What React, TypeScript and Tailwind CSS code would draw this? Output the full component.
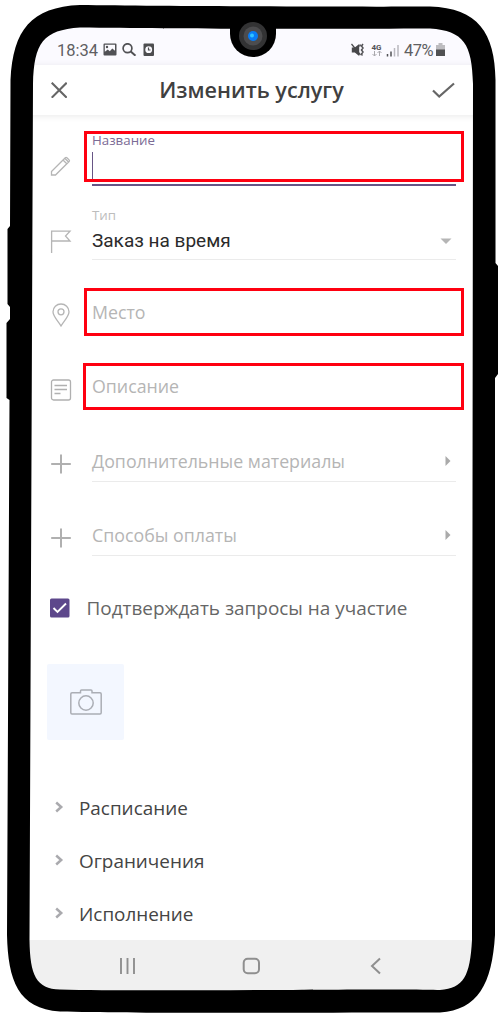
import type { ReactNode } from "react";

const sans = "font-['Open_Sans','Noto_Sans',sans-serif]";
const roboto = "font-['Roboto',sans-serif]";

function StatusBar() {
  return (
    <div className={`${roboto} flex h-[65px] items-end bg-[#fbfaff] pr-[54px] pb-[4px] pl-[57px] text-[16.5px] text-[#5f5f63]`}>
      <span className="w-[46px] leading-5 whitespace-nowrap">18:34</span>
      <svg className="mb-[5px] h-[13px] w-[52px]" viewBox="0 0 52 13">
        <path fillRule="evenodd" fill="#515155" d="M1.5.5h11q1 0 1 1v10q0 1-1 1h-11q-1 0-1-1v-10q0-1 1-1zm.3 1.300v7l3-2.200 2 1.600 2.500-2.600 2.700 2.200V1.800z" />
        <circle cx="4" cy="4" r="1.200" fill="#515155" />
        <circle cx="24.500" cy="5.200" r="4.400" fill="none" stroke="#515155" strokeWidth="1.700" />
        <path d="m27.500 8.200 5 4.500" stroke="#515155" strokeWidth="2" />
        <rect x="40.500" y=".5" width="10.500" height="12.500" rx="1" fill="#4d4d50" />
        <circle cx="45.700" cy="6.700" r="3.400" fill="#fbfaff" />
        <path d="M45.500 4.500V7h2" stroke="#4d4d50" strokeWidth="1.200" fill="none" />
      </svg>
      <div className="flex-1" />
      <svg className="mb-[4px] h-[14px] w-[50px] shrink-0" viewBox="0 0 50 14">
        <path d="M.8 4.500h3L8.200 1v12L3.800 9.500h-3z" fill="#48484b" />
        <path d="m.5 1 9 11" stroke="#48484b" strokeWidth="1.200" />
        <path d="m9.500 1.500-1 2M12 1l-1.500 2 1.500 2-1.500 2 1.500 2-1.500 2 1 1.500" stroke="#515155" strokeWidth="1.500" fill="none" />
        <text x="20.500" y="6.500" fontSize="8" fontWeight="700" fill="#515155">4G</text>
        <path d="M23.500 8v5m-2-2 2 2 2-2M28.500 13V8m-2 2 2-2 2 2" stroke="#aaa9ae" strokeWidth="1" fill="none" />
        <path d="M36.500 11v2.500M40 8.500v5" stroke="#515155" strokeWidth="1.500" />
        <path d="M43.500 5v8.500M47 2v11.500" stroke="#b9b8be" strokeWidth="1.500" />
      </svg>
      <span className="ml-[3px] w-[32px] text-[16.500px] leading-5 tracking-[-0.5px] whitespace-nowrap">47%</span>
      <svg className="mr-[1px] mb-[5px] h-[13px] w-[9px] shrink-0" viewBox="0 0 9 13">
        <path d="M0 2h2.500V0h4v2H9v5H0z" fill="#bdbcc0" />
        <path d="M0 6.500h9V13H0z" fill="#515153" />
      </svg>
    </div>
  );
}

function Header() {
  return (
    <div className="relative z-10 flex h-[50px] items-center justify-between bg-white pr-[45px] pl-[51px] shadow-[0_1px_7px_rgba(0,0,0,0.09)]">
      <svg className="h-[16px] w-[16px]" viewBox="0 0 16 16">
        <path d="m.7.7 15 15M15.700.7l-15 15" stroke="#666" strokeWidth="2.100" />
      </svg>
      <h1 className={`${sans} ml-[4px] text-[21.600px] leading-[30px] font-semibold whitespace-nowrap text-[#404040]`}>Изменить услугу</h1>
      <svg className="h-[17px] w-[23px]" viewBox="0 0 23 17">
        <path d="m1 8.500 6.200 6L22 1.500" stroke="#666" strokeWidth="2.200" fill="none" />
      </svg>
    </div>
  );
}

function Row({ icon, children, line = true }: { icon: ReactNode; children: ReactNode; line?: boolean }) {
  return (
    <div className="flex h-[74px] pr-[44px] pl-[50px]">
      <div className="flex w-[42px] shrink-0 items-end pb-[7px]">{icon}</div>
      <div className={line ? "flex flex-1 flex-col justify-end border-b-[1.500px] border-[#ebebeb]" : "flex flex-1 flex-col justify-end border-b-[1.500px] border-transparent"}>
        {children}
      </div>
    </div>
  );
}

function Placeholder({ children, arrow = false }: { children: ReactNode; arrow?: boolean }) {
  return (
    <div className={`${sans} flex items-center justify-between pb-[8px] text-[17.800px] leading-6 text-[#b5b5b5]`}>
      <span className="whitespace-nowrap">{children}</span>
      {arrow && (
        <svg className="mr-[5px] h-[10px] w-[6px]" viewBox="0 0 6 10">
          <path d="M.5 0 5.500 5l-5 5z" fill="#aaa" />
        </svg>
      )}
    </div>
  );
}

function Plus() {
  return (
    <svg className="h-[22px] w-[22px]" viewBox="0 0 22 22">
      <path d="M11 1.500v19M1.200 11h19.600" stroke="#b0b0b0" strokeWidth="2" />
    </svg>
  );
}

function Accordion({ label }: { label: string }) {
  return (
    <div className="flex h-[53px] items-center pl-[55px]">
      <svg className="mb-px h-[12px] w-[9px]" viewBox="0 0 9 12">
        <path d="m1.200 1.500 5 4.500-5 4.500" stroke="#aaaaae" strokeWidth="2.500" fill="none" />
      </svg>
      <span className={`${sans} ml-[15px] text-[18.900px] leading-6 text-[#444]`}>{label}</span>
    </div>
  );
}

function NavBar() {
  return (
    <div className="flex h-[76px] bg-[#f0f0f0] pt-[17px] pl-[119px]">
      <svg className="h-[18px] w-[17px]" viewBox="0 0 17 18">
        <path d="M2 1v16M8.500 1v16M15 1v16" stroke="#8f8f8f" strokeWidth="1.900" />
      </svg>
      <svg className="ml-[106px] h-[18px] w-[19px]" viewBox="0 0 19 18">
        <rect x="1.700" y="1.700" width="15.300" height="14.600" rx="4" fill="none" stroke="#8f8f8f" strokeWidth="2" />
      </svg>
      <svg className="ml-[109px] h-[18px] w-[12px]" viewBox="0 0 12 18">
        <path d="M10 1.500 2 9l8 7.500" stroke="#8f8f8f" strokeWidth="2" fill="none" />
      </svg>
    </div>
  );
}

function PhoneFrame() {
  return (
    <svg className="pointer-events-none absolute inset-0 z-20 h-[1016px] w-[500px]" viewBox="0 0 500 1016">
      <path
        fill="#fff"
        fillRule="evenodd"
        d="M0 0H500V1016H0Z M80 15Q250 17 430 16C475 19 484 40 485 80V940C483 985 475 998 440 1002Q250 1004 60 1000C25 997 17 975 17 940L20 80C24 35 35 18 80 15Z"
      />
      <path
        fillRule="evenodd"
        d="M80 5C160 6 350 7 430 6.500C478 8 495 33 495.500 80V263L498 266V374L495 378V935C492 984 478 1010 440 1012.500C350 1012 150 1014 60 1011.500C18 1009 8 980 7 935L9.500 400L6.500 398V323L10 319V307L7.500 304V229L10 226L10.500 80C13 30 31 7 80 5Z M80 27.500C180 29 340 29 430 28.500C464 31 472 44 473 84L472 940C470 976 464 988 440 990C410 988 150 992 60 989.500C36 989 30 975 29.500 940L33 84C34 43 43 30 80 27.500Z"
      />
      <path d="M230 28H276V34A23 23 0 0 1 230 34Z" />
      <circle cx="253" cy="36" r="14" fill="#333334" />
      <circle cx="253" cy="36" r="9.500" fill="#4c4c4e" />
      <circle cx="253" cy="36" r="5" fill="#087cf4" />
      <circle cx="252" cy="35.500" r="2" fill="#30c4ff" />
    </svg>
  );
}

export default function App() {
  return (
    <div className="relative h-[1016px] w-[500px] overflow-hidden bg-white">
      <StatusBar />
      <Header />
      <div className="flex h-[71px] pr-[44px] pl-[50px]">
        <div className="w-[42px] shrink-0 pt-[41px]">
          <svg className="h-[21px] w-[21px]" viewBox="0 0 21 21" fill="none" stroke="#b5b5b5" strokeWidth="1.300">
            <path d="M1.500 15.500 15.300 1.700q.8-.7 1.600 0l2.200 2.200q.8.800 0 1.600L5.500 19H1.500zM13 4l4 4M15 2.500l3.500 3.500" />
          </svg>
        </div>
        <div className={`${sans} flex-1 border-b-2 border-[#675585] pt-[17px] text-[13.300px] leading-4 text-[#7b6b95]`}>
          <div>Название</div>
          <div className="mt-[4px] h-[27px] w-px bg-[#675585]" />
        </div>
      </div>
      <Row
        icon={
          <svg className="h-[23px] w-[22px]" viewBox="0 0 22 23" fill="none" stroke="#b5b5b5" strokeWidth="1.300">
            <path d="M1.600 23V1.200H20L15.500 6l4.500 5H1.600" />
          </svg>
        }
      >
        <div className={`${sans} text-[13.300px] leading-4 text-[#bdbdbd]`}>Тип</div>
        <div className={`${roboto} flex items-center justify-between pt-[6px] pb-[6px] text-[19px] leading-6 text-[#2b2b2b]`}>
          <span>Заказ на время</span>
          <svg className="mr-[4px] mb-px h-[6px] w-[12px]" viewBox="0 0 12 6">
            <path d="M.5.5h11L6 6z" fill="#b5b5b5" />
          </svg>
        </div>
      </Row>
      <Row
        line={false}
        icon={
          <svg className="h-[24px] w-[22px]" viewBox="0 0 22 24" fill="none" stroke="#b5b5b5" strokeWidth="1.300">
            <path d="M11 23C8.500 18.500 3 13.500 3 8.800a8 7.800 0 0 1 16 0C19 13.500 13.500 18.500 11 23z" />
            <circle cx="11" cy="8.800" r="3" />
          </svg>
        }
      >
        <div className="pb-px">
          <Placeholder>Место</Placeholder>
        </div>
      </Row>
      <Row
        line={false}
        icon={
          <svg className="h-[22px] w-[22px]" viewBox="0 0 22 22" fill="none" stroke="#b0b0b0" strokeWidth="1.300">
            <rect x="1.500" y="1" width="19" height="20" rx="2" />
            <path d="M4.500 6.500h12.500M4.500 10.500h12.500M4.500 14.500h6" />
          </svg>
        }
      >
        <div className="pb-px">
          <Placeholder>Описание</Placeholder>
        </div>
      </Row>
      <Row icon={<Plus />}>
        <Placeholder arrow>Дополнительные материалы</Placeholder>
      </Row>
      <Row icon={<Plus />}>
        <Placeholder arrow>Способы оплаты</Placeholder>
      </Row>
      <div className="flex h-[108px] items-start pt-[40px] pl-[50px]">
        <svg className="mt-[2px] h-[20px] w-[20px]" viewBox="0 0 20 20">
          <rect x="0" y=".5" width="19.500" height="19" rx="1.500" fill="#5d478b" />
          <path d="m3.500 10 4 4 8.500-8.500" stroke="#fff" strokeWidth="1.900" fill="none" />
        </svg>
        <span className={`${sans} ml-[16.500px] text-[18.950px] leading-6 whitespace-nowrap text-[#666]`}>Подтверждать запросы на участие</span>
      </div>
      <div className="ml-[47px] flex h-[76px] w-[77px] items-center justify-center rounded-[2px] bg-[#f3f7ff]">
        <svg className="h-[26px] w-[32px]" viewBox="0 0 32 26" fill="none" stroke="#abaeb5" strokeWidth="1.500">
          <path d="M2 3.800h8.500V2q0-1 1-1h9.500q1 0 1 1v1.800h8q1.200 0 1.200 1.200v18.800q0 1.200-1.200 1.200H2Q.8 25 .8 23.800V5Q.8 3.800 2 3.800z" />
          <circle cx="16" cy="14" r="7.200" />
        </svg>
      </div>
      <div className="h-[200px] pt-[41px]">
        <Accordion label="Расписание" />
        <Accordion label="Ограничения" />
        <Accordion label="Исполнение" />
      </div>
      <NavBar />
      <div className="absolute top-[131px] left-[84px] z-10 h-[51px] w-[380px] border-3 border-[#ff0010]" />
      <div className="absolute top-[288px] left-[84px] z-10 h-[48px] w-[380px] border-3 border-[#ff0010]" />
      <div className="absolute top-[363px] left-[83px] z-10 h-[47px] w-[381px] border-3 border-[#ff0010]" />
      <PhoneFrame />
    </div>
  );
}
